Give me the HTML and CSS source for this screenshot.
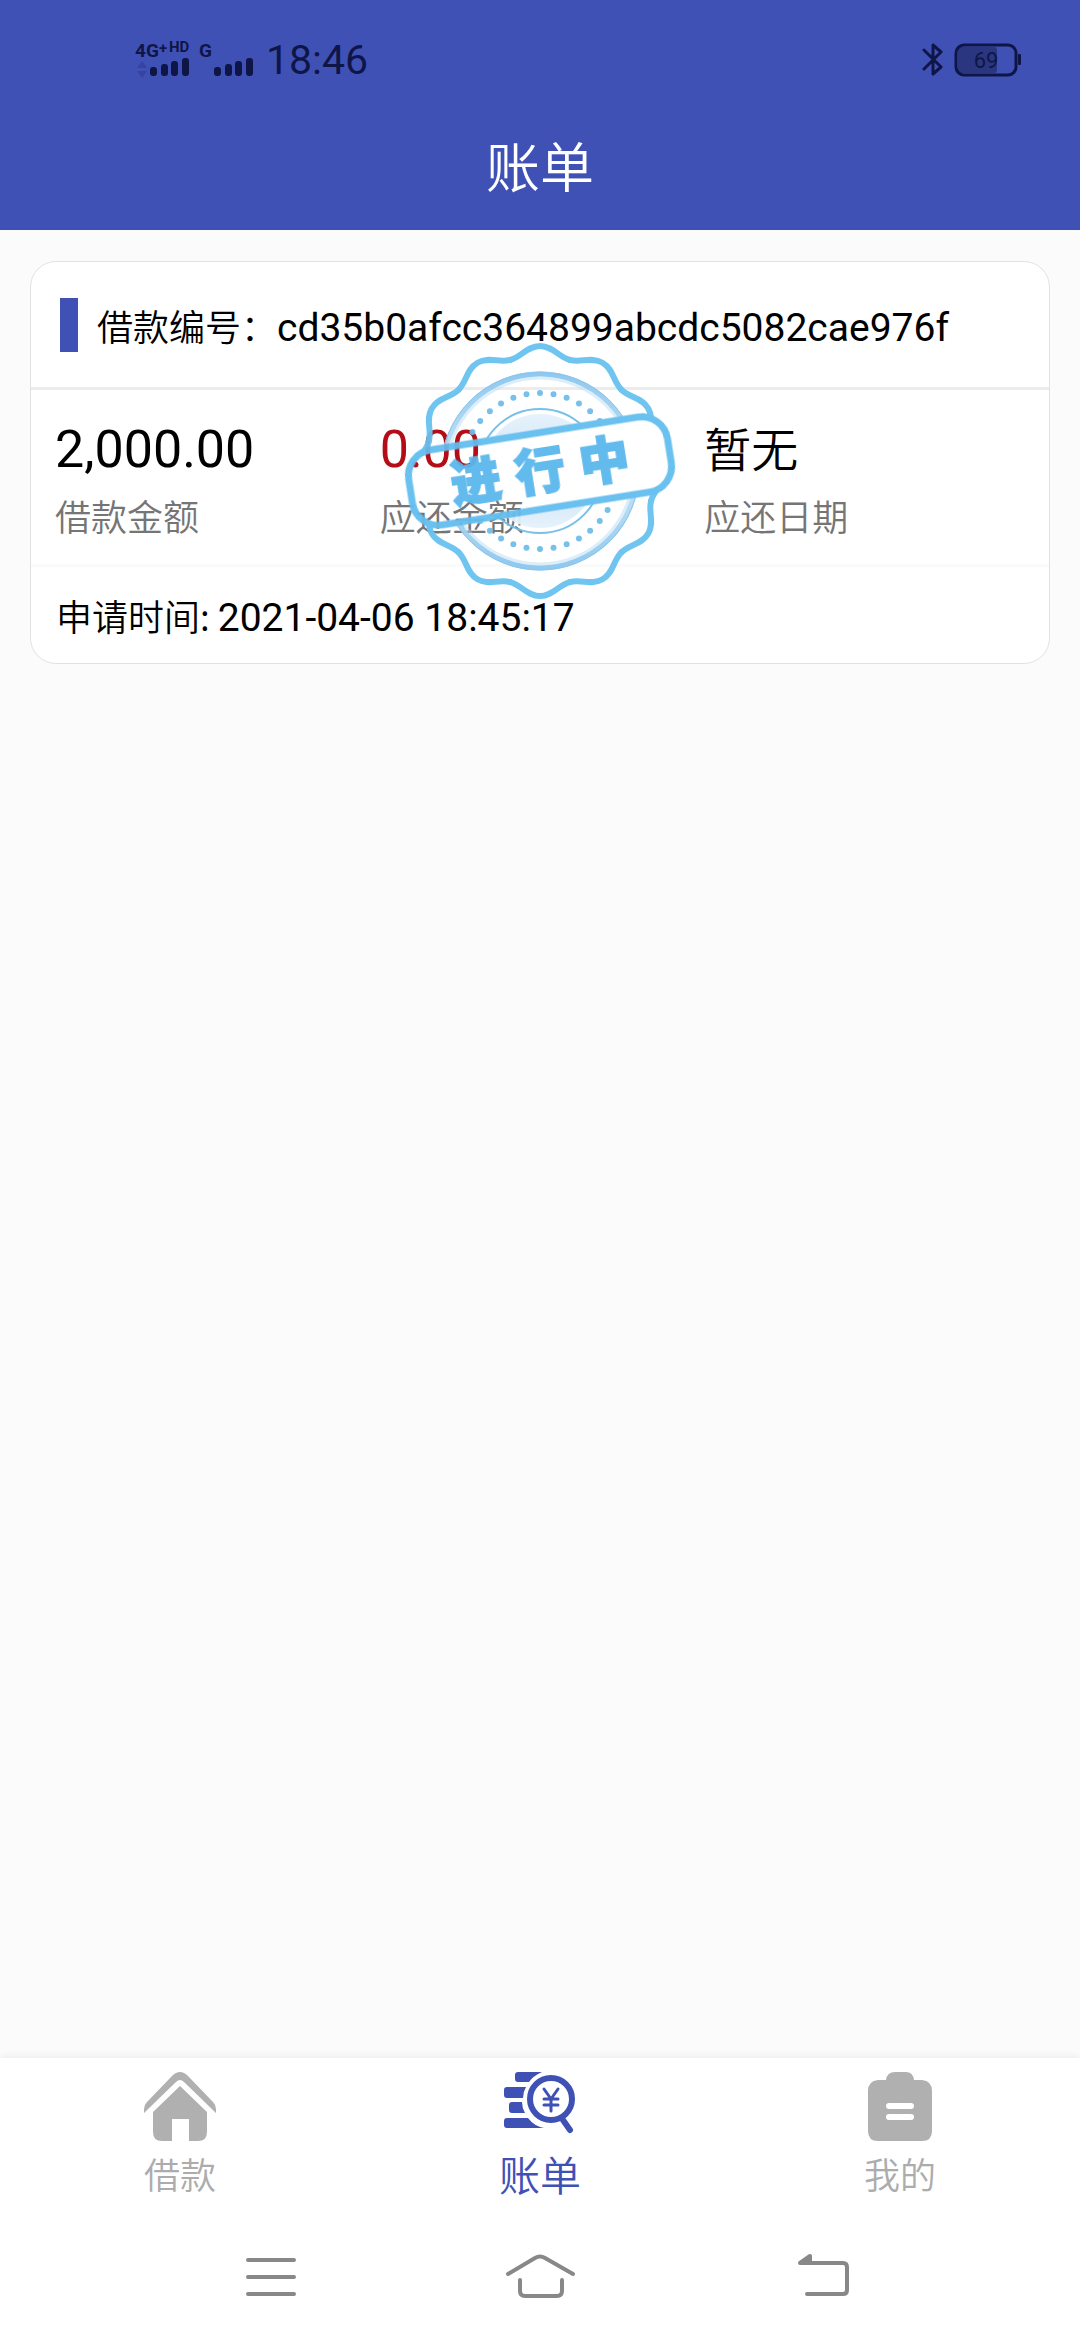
FILE: index.html
```html
<!DOCTYPE html>
<html lang="zh-CN">
<head>
<meta charset="utf-8">
<meta name="viewport" content="width=device-width">
<title>账单</title>
<link rel="stylesheet" href="styles.css">
</head>
<body>
<header class="top">
  <div class="status">
    <svg class="signal" viewBox="0 -10 122 60" aria-hidden="true">
      <g class="signal-text">
        <text x="0" y="17" font-size="19">4G</text>
        <text x="24" y="13" font-size="15">+</text>
        <text x="34" y="12" font-size="15">HD</text>
        <text x="64" y="17" font-size="19">G</text>
      </g>
      <path d="M2 28L7 21L12 28ZM2 31L7 38L12 31Z" fill="#3444a0"/>
      <g fill="#0f1647">
        <rect x="15" y="27" width="7" height="9" rx="3"/><rect x="26" y="24" width="7" height="12" rx="3"/>
        <rect x="36" y="21" width="7" height="15" rx="3"/><rect x="47" y="18" width="7" height="18" rx="3"/>
        <rect x="79" y="27" width="7" height="9" rx="3"/><rect x="90" y="24" width="7" height="12" rx="3"/>
        <rect x="100" y="21" width="7" height="15" rx="3"/><rect x="111" y="18" width="7" height="18" rx="3"/>
      </g>
    </svg>
    <time class="clock">18:46</time>
    <svg class="bluetooth" viewBox="0 0 22 36" aria-hidden="true"><path d="M2 8L19 25L11 32V3L19 10L2 27"/></svg>
    <svg class="battery" viewBox="0 0 68 36" aria-hidden="true">
      <rect x="4" y="5" width="39" height="26" rx="3" fill="#2a3780"/>
      <rect x="2" y="3" width="60" height="30" rx="8" fill="none" stroke="#0f1647" stroke-width="3"/>
      <rect x="64" y="12" width="3" height="11" rx="1" fill="#0f1647"/>
      <text x="32" y="26" text-anchor="middle" font-size="22" fill="#0f1647">69</text>
    </svg>
  </div>
  <h1 class="title">账单</h1>
</header>

<main class="content">
  <article class="card">
    <h2 class="card-head"><span class="mark"></span><span>借款编号：<span class="latin">cd35b0afcc364899abcdc5082cae976f</span></span></h2>
    <dl class="figures">
      <div class="figure"><dd class="amount">2,000.00</dd><dt>借款金额</dt></div>
      <div class="figure"><dd class="amount due">0.00</dd><dt>应还金额</dt></div>
      <div class="figure"><dd class="none">暂无</dd><dt>应还日期</dt></div>
    </dl>
    <p class="applied"><span>申请时间: <time class="latin">2021-04-06 18:45:17</time></span></p>

    <svg class="stamp" viewBox="-137 -128 274 256" role="img" aria-label="进行中">
      <defs>
        <path id="scallop" d="M-29.8 -111.1C-18.2 -114.2 -13 -125 0 -125S18.2 -114.2 29.8 -111.1"/>
        <linearGradient id="halo" x1="0" y1="0" x2="0" y2="1"><stop offset="0" stop-color="#8cc6ee"/><stop offset=".5" stop-color="#c9e5f7"/><stop offset="1" stop-color="#8cc6ee"/></linearGradient>
        <linearGradient id="core" x1="0" y1="0" x2="0" y2="1"><stop offset="0" stop-color="#e6f2fb"/><stop offset=".35" stop-color="#cfe7f8"/><stop offset=".7" stop-color="#cfe7f8"/><stop offset="1" stop-color="#e6f2fb"/></linearGradient>
        <mask id="outside">
          <rect x="-137" y="-128" width="274" height="256" fill="#fff"/>
          <rect x="-131" y="-38" width="262" height="76" rx="26" fill="#000" transform="rotate(-9)"/>
        </mask>
      </defs>
      <g mask="url(#outside)">
        <g fill="none" stroke="#69c2f0" stroke-width="6" stroke-linecap="round">
          <use href="#scallop"/><use href="#scallop" transform="rotate(30)"/><use href="#scallop" transform="rotate(60)"/>
          <use href="#scallop" transform="rotate(90)"/><use href="#scallop" transform="rotate(120)"/><use href="#scallop" transform="rotate(150)"/>
          <use href="#scallop" transform="rotate(180)"/><use href="#scallop" transform="rotate(210)"/><use href="#scallop" transform="rotate(240)"/>
          <use href="#scallop" transform="rotate(270)"/><use href="#scallop" transform="rotate(300)"/><use href="#scallop" transform="rotate(330)"/>
        </g>
        <circle r="97" fill="none" stroke="url(#halo)" stroke-width="5"/>
        <circle r="93" fill="none" stroke="#b5dbf4" stroke-width="3" opacity=".5"/>
        <circle r="99" fill="none" stroke="#82c4ec" stroke-width="1"/>
        <circle r="78" fill="none" stroke="#6fbde9" stroke-width="6" stroke-linecap="round" pathLength="360" stroke-dasharray="0 10"/>
        <circle r="62" fill="none" stroke="#6fbde9" stroke-width="2"/>
        <circle r="57" fill="url(#core)"/>
      </g>
      <g transform="rotate(-9)">
        <rect x="-131" y="-38" width="262" height="76" rx="26" fill="none" stroke="#62bdee" stroke-width="7"/>
        <text class="stamp-text" x="-65 0 65" y="18" text-anchor="middle">进行中</text>
      </g>
    </svg>
  </article>
</main>

<nav class="tabs">
  <a class="tab" href="#loan">
    <svg viewBox="0 0 72 72" aria-hidden="true" fill="#b0b0b0">
      <path d="M0 41V37Q0 33 3 30L28 4Q36 -4 44 4L69 30Q72 33 72 37V41L40 10Q36 6 32 10Z"/>
      <path d="M36 14L63 40V60Q63 69 54 69H45V47H28V69H18Q9 69 9 60V40Z"/>
    </svg>
    <span>借款</span>
  </a>
  <a class="tab active" href="#bills" aria-current="page">
    <svg viewBox="0 0 72 72" aria-hidden="true" fill="#3f51b5">
      <path d="M14 0H38Q29 4 25 10H14Q11 10 11 7V3Q11 0 14 0ZM3 15H22Q19 20 19 26H3Q0 26 0 23V18Q0 15 3 15ZM8 30H18Q18 36 21 41H8Q5 41 5 38V33Q5 30 8 30ZM3 46H24Q30 54 40 56H3Q0 56 0 53V49Q0 46 3 46Z"/>
      <g fill="none" stroke="#3f51b5"><circle cx="47" cy="27" r="21" stroke-width="6"/><path d="M59 48L66 58" stroke-width="6" stroke-linecap="round"/><path d="M40 17L47 27L54 17M47 27V39M40 27H54M40 33H54" stroke-width="3" stroke-linecap="round"/></g>
    </svg>
    <span>账单</span>
  </a>
  <a class="tab" href="#mine">
    <svg viewBox="0 0 72 72" aria-hidden="true">
      <path d="M14 8H22Q23 0 31 0H42Q49 0 50 8H58Q68 9 68 19V59Q68 69 58 69H14Q4 69 4 59V19Q4 9 14 8Z" fill="#b0b0b0"/>
      <path d="M25 34H47M25 45H47" stroke="#fff" stroke-width="6" stroke-linecap="round"/>
    </svg>
    <span>我的</span>
  </a>
</nav>

<div class="system">
  <button type="button" aria-label="菜单"><svg viewBox="0 0 80 48"><path d="M18 7H64M18 24H64M18 41H64"/></svg></button>
  <button type="button" aria-label="主页"><svg viewBox="0 0 80 48"><path d="M8 21L35 5Q40 2 45 5L73 21M20 27V38Q20 43 25 43H57Q62 43 62 38V27"/></svg></button>
  <button type="button" aria-label="返回"><svg viewBox="0 0 80 48"><path d="M46 10H73Q77 10 77 14V37Q77 41 73 41H37"/><path class="solid" d="M30 10L40 3V10Z"/><path d="M31 10H48"/></svg></button>
</div>
</body>
</html>
```
FILE: styles.css
```css
* { box-sizing: border-box; margin: 0; padding: 0; }

body {
  min-height: 100vh;
  display: flex;
  flex-direction: column;
  background: #fbfbfb;
  color: #000;
  font-family: "Noto Sans CJK SC", sans-serif;
  font-size: 36px;
}

svg { display: block; }

/* Header */
.top { background: #3f51b5; padding-bottom: 20px; }
.status {
  height: 120px;
  padding: 0 58px 0 135px;
  display: flex;
  align-items: center;
  font-family: Roboto, sans-serif;
}
.signal { width: 122px; height: 60px; margin-right: 9px; }
.signal-text { fill: #0f1647; font-weight: 700; }
.clock { flex: 1; font-size: 41px; line-height: 50px; color: #0f1647; }
.bluetooth { width: 22px; height: 36px; margin-right: 10px; fill: none; stroke: #0f1647; stroke-width: 3; stroke-linecap: round; stroke-linejoin: round; }
.battery { width: 68px; height: 36px; }
.title {
  text-align: center;
  color: #fff;
  font-size: 54px;
  line-height: 90px;
  font-weight: 350;
}

/* Bill card */
.content { flex: 1; padding: 31px 30px; }
.card {
  position: relative;
  border: 1px solid #e2e2e2;
  border-radius: 26px;
  background: #fff;
}
.card-head {
  height: 128px;
  display: flex;
  align-items: center;
  padding: 0 29px;
  border-bottom: 3px solid #ececec;
  font-size: 36px;
  font-weight: 350;
}
.mark { width: 18px; height: 54px; margin-right: 19px; background: #3f51b5; }
.latin { font-family: Roboto, sans-serif; font-size: 39px; font-weight: 400; line-height: 40px; }
.figures {
  display: grid;
  grid-template-columns: repeat(3, 1fr);
  padding: 24px 20px 15px 24px;
  border-bottom: 3px solid #fafafa;
}
.figure dd { height: 68px; }
.figure dt { height: 67px; line-height: 67px; color: #757575; font-weight: 350; }
.amount { font-family: Roboto, sans-serif; font-size: 52px; line-height: 71px; }
.due { color: #b50d18; }
.none { font-size: 47px; line-height: 66px; font-weight: 350; }
.applied {
  height: 96px;
  display: flex;
  align-items: center;
  padding: 0 25px;
  line-height: 60px;
  font-weight: 350;
}

.stamp {
  position: absolute;
  top: 81px;
  left: 50%;
  width: 274px;
  height: 256px;
  transform: translateX(-50%);
  opacity: .95;
}
.stamp-text { font-size: 50px; font-weight: 900; fill: #5bb8ec; stroke: #5bb8ec; stroke-width: 2px; }

/* Tab bar */
.tabs {
  display: grid;
  grid-template-columns: repeat(3, 1fr);
  padding: 14px 0 2px;
  background: #fff;
  box-shadow: 0 -2px 8px rgba(0, 0, 0, .06);
}
.tab {
  display: flex;
  flex-direction: column;
  align-items: center;
  color: #acacac;
  font-size: 36px;
  font-weight: 350;
  line-height: 58px;
  text-decoration: none;
}
.tab svg { width: 72px; height: 72px; }
.active { color: #3f51b5; font-size: 41px; }

/* System navigation */
.system {
  height: 136px;
  display: grid;
  grid-template-columns: repeat(3, 1fr);
  align-items: center;
  justify-items: center;
  padding: 10px 135px 0;
  background: #fff;
}
.system button { border: 0; background: none; }
.system svg { width: 80px; height: 48px; fill: none; stroke: #888; stroke-width: 4; stroke-linecap: round; stroke-linejoin: round; }
.system .solid { fill: #888; }
```
